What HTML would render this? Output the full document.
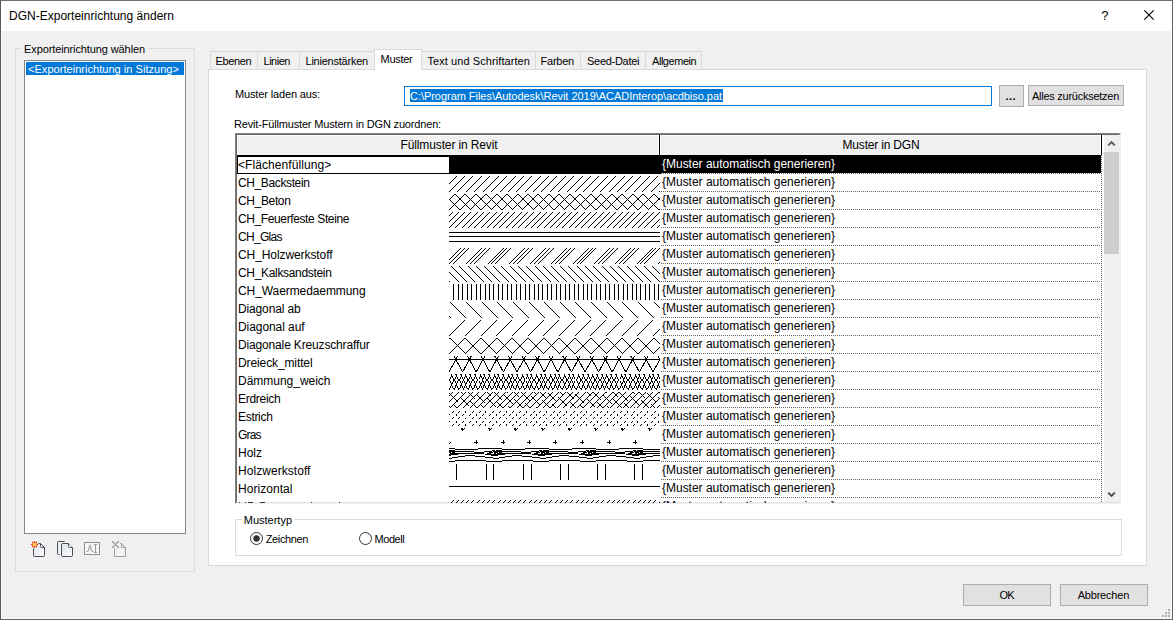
<!DOCTYPE html>
<html lang="de">
<head>
<meta charset="utf-8">
<title>DGN-Exporteinrichtung ändern</title>
<style>
html,body{margin:0;padding:0;}
body{width:1173px;height:620px;overflow:hidden;background:#f0f0f0;font-family:"Liberation Sans",sans-serif;font-size:11px;color:#000;position:relative;}
.a{position:absolute;box-sizing:border-box;}
.t{position:absolute;white-space:pre;line-height:16px;height:16px;}
.grp{border:1px solid #dcdcdc;}
.btn{background:#e1e1e1;border:1px solid #adadad;}
.dot{height:1px;background-image:repeating-linear-gradient(90deg,#666 0 1px,#fff 1px 2px);}
svg{position:absolute;overflow:hidden;}
</style>
</head>
<body>
<div class="a" style="left:0px;top:0px;width:1173px;height:620px;border:1px solid #646464;border-top-color:#6e6e6e;border-left-color:#5a5a5a;"></div>
<div class="a" style="left:1px;top:618px;width:1171px;height:1px;background:#fafafa;"></div>
<div class="a" style="left:1171px;top:31px;width:1px;height:588px;background:#fafafa;"></div>
<div class="a" style="left:1px;top:31px;width:1px;height:588px;background:#fafafa;"></div>
<div class="a" style="left:1px;top:1px;width:1171px;height:30px;background:#fff;"></div>
<svg style="left:1144px;top:10px" width="10" height="10" viewBox="0 0 10 10"><path d="M0.3 0.3 L9.7 9.7 M9.7 0.3 L0.3 9.7" stroke="#000" stroke-width="1.1" fill="none"/></svg>
<div class="a grp" style="left:15px;top:48px;width:180px;height:524px;"></div>
<div class="a" style="left:21px;top:44px;width:127px;height:10px;background:#f0f0f0;"></div>
<div class="a" style="left:24px;top:60px;width:162px;height:474px;background:#fff;border:1px solid #828790;"></div>
<div class="a" style="left:26px;top:62px;width:158px;height:13px;background:#0078d7;"></div>
<div class="a" style="left:208px;top:69px;width:939px;height:497px;background:#fff;border:1px solid #d9d9d9;"></div>
<div class="a" style="left:210px;top:51px;width:492px;height:18px;background:#f0f0f0;border:1px solid #d9d9d9;border-bottom:none;"></div>
<div class="a" style="left:257px;top:52px;width:1px;height:17px;background:#d9d9d9;"></div>
<div class="a" style="left:299px;top:52px;width:1px;height:17px;background:#d9d9d9;"></div>
<div class="a" style="left:535px;top:52px;width:1px;height:17px;background:#d9d9d9;"></div>
<div class="a" style="left:580px;top:52px;width:1px;height:17px;background:#d9d9d9;"></div>
<div class="a" style="left:645px;top:52px;width:1px;height:17px;background:#d9d9d9;"></div>
<div class="a" style="left:374px;top:49px;width:48px;height:21px;background:#fff;border:1px solid #d9d9d9;border-bottom:none;"></div>
<div class="a" style="left:404px;top:86px;width:588px;height:20px;background:#fff;border:1px solid #0078d7;"></div>
<div class="a" style="left:410px;top:89px;width:313px;height:13px;background:#0078d7;"></div>
<div class="a btn" style="left:999px;top:85px;width:25px;height:22px;"></div>
<div class="a btn" style="left:1028px;top:85px;width:96px;height:21px;"></div>
<div class="a" style="left:235px;top:133px;width:886px;height:371px;background:#fff;border:1px solid #828282;border-right-color:#f0f0f0;border-bottom-color:#f0f0f0;"></div>
<div class="a" style="left:236px;top:134px;width:884px;height:369px;border:1px solid #696969;border-right-color:#e3e3e3;border-bottom-color:#e3e3e3;"></div>
<div class="a" style="left:237px;top:135px;width:865px;height:20px;background:#fff;"></div>
<div class="a" style="left:238px;top:136px;width:420px;height:19px;background:#f0f0f0;"></div>
<div class="a" style="left:661px;top:136px;width:439px;height:19px;background:#f0f0f0;"></div>
<div class="a" style="left:659px;top:135px;width:1px;height:20px;background:#000;"></div>
<div class="a" style="left:1101px;top:135px;width:1px;height:20px;background:#000;"></div>
<div class="a" style="left:237px;top:155px;width:864px;height:19px;background:#000;"></div>
<div class="a" style="left:238px;top:157px;width:211px;height:16px;background:#fff;"></div>
<div class="a dot" style="left:661px;top:173px;width:440px;height:1px;"></div>
<div class="a dot" style="left:661px;top:191px;width:440px;height:1px;"></div>
<div class="a dot" style="left:661px;top:209px;width:440px;height:1px;"></div>
<div class="a dot" style="left:661px;top:227px;width:440px;height:1px;"></div>
<div class="a dot" style="left:661px;top:245px;width:440px;height:1px;"></div>
<div class="a dot" style="left:661px;top:263px;width:440px;height:1px;"></div>
<div class="a dot" style="left:661px;top:281px;width:440px;height:1px;"></div>
<div class="a dot" style="left:661px;top:299px;width:440px;height:1px;"></div>
<div class="a dot" style="left:661px;top:317px;width:440px;height:1px;"></div>
<div class="a dot" style="left:661px;top:335px;width:440px;height:1px;"></div>
<div class="a dot" style="left:661px;top:353px;width:440px;height:1px;"></div>
<div class="a dot" style="left:661px;top:371px;width:440px;height:1px;"></div>
<div class="a dot" style="left:661px;top:389px;width:440px;height:1px;"></div>
<div class="a dot" style="left:661px;top:407px;width:440px;height:1px;"></div>
<div class="a dot" style="left:661px;top:425px;width:440px;height:1px;"></div>
<div class="a dot" style="left:661px;top:443px;width:440px;height:1px;"></div>
<div class="a dot" style="left:661px;top:461px;width:440px;height:1px;"></div>
<div class="a dot" style="left:661px;top:479px;width:440px;height:1px;"></div>
<div class="a dot" style="left:661px;top:497px;width:440px;height:1px;"></div>
<div class="a" style="left:1101px;top:155px;width:1px;height:347px;width:1px;background-image:repeating-linear-gradient(180deg,#666 0 1px,#fff 1px 2px);"></div>
<div class="a" style="left:1104px;top:135px;width:17px;height:367px;background:#f0f0f0;"></div>
<div class="a" style="left:1104px;top:152px;width:15px;height:102px;background:#cdcdcd;"></div>
<svg style="left:1107px;top:140px" width="9" height="7" viewBox="0 0 9 7"><path d="M1.2 5.4 L4.5 2.1 L7.8 5.4" stroke="#5c5c5c" stroke-width="2" fill="none"/></svg>
<svg style="left:1107px;top:491px" width="9" height="7" viewBox="0 0 9 7"><path d="M1.2 1.6 L4.5 4.9 L7.8 1.6" stroke="#4a4a4a" stroke-width="2" fill="none"/></svg>
<div class="a grp" style="left:235px;top:519px;width:887px;height:37px;"></div>
<div class="a" style="left:242px;top:513px;width:52px;height:12px;background:#fff;"></div>
<svg style="left:250px;top:532px" width="13" height="13" viewBox="0 0 13 13"><circle cx="6.5" cy="6.5" r="6" fill="#fff" stroke="#333" stroke-width="1"/><circle cx="6.5" cy="6.5" r="3.2" fill="#333"/></svg>
<svg style="left:359px;top:532px" width="13" height="13" viewBox="0 0 13 13"><circle cx="6.5" cy="6.5" r="6" fill="#fff" stroke="#333" stroke-width="1"/></svg>
<div class="a btn" style="left:963px;top:584px;width:88px;height:22px;"></div>
<div class="a btn" style="left:1060px;top:584px;width:88px;height:22px;"></div>
<svg style="left:30px;top:540px" width="17" height="18" viewBox="0 0 17 18"><defs><linearGradient id="g1" x1="0" y1="0" x2="1" y2="1"><stop offset="0" stop-color="#dde1e9"/><stop offset="1" stop-color="#fdfdfe"/></linearGradient></defs><path d="M3.5 7 V15.5 Q3.5 16.5 4.5 16.5 H13.5 Q14.5 16.5 14.5 15.5 V7.5 L10.5 3.5 H7 Z" fill="url(#g1)" stroke="none"/><path d="M3.5 8.5 V15.5 Q3.5 16.5 4.5 16.5 H13.5 Q14.5 16.5 14.5 15.5 V7.5 L10.5 3.5 H8.5 M10.5 3.5 V6.5 Q10.5 7.5 11.5 7.5 H14.5" fill="none" stroke="#474c55" stroke-width="1"/><path d="M4.5 1 V8 M1 4.5 H8 M2 2 L7 7 M7 2 L2 7" stroke="#e62310" stroke-width="1.1" fill="none"/><circle cx="4.5" cy="4.5" r="1.9" fill="#ffb21c"/><circle cx="4.5" cy="4.5" r="1.1" fill="#fff45a"/></svg>
<svg style="left:55px;top:539px" width="19" height="19" viewBox="0 0 19 19"><path d="M9.7 2.5 H3.5 Q2.5 2.5 2.5 3.5 V14.5 Q2.5 15.5 3.5 15.5 H6 V2.5 Z" fill="#eceef3" stroke="none"/><path d="M9.7 2.5 H3.5 Q2.5 2.5 2.5 3.5 V14.5 Q2.5 15.5 3.5 15.5 H4.6" fill="none" stroke="#474c55" stroke-width="1"/><path d="M6.5 5.5 Q6.5 4.5 7.5 4.5 H13.5 L17.5 8.5 V16.5 Q17.5 17.5 16.5 17.5 H7.5 Q6.5 17.5 6.5 16.5 Z" fill="url(#g1)" stroke="#474c55" stroke-width="1"/><path d="M13.5 4.5 V7.5 Q13.5 8.5 14.5 8.5 H17.5" fill="#fff" stroke="#474c55" stroke-width="1"/></svg>
<svg style="left:83px;top:541px" width="18" height="15" viewBox="0 0 18 15"><rect x="1.5" y="1.5" width="15" height="12" fill="#f6f6f6" stroke="#8f8f8f" stroke-width="1"/><path d="M3.5 10.5 h1.5 L7 5 L9 10.5 h1.5 M7 3.5 V5" fill="none" stroke="#9a9a9a" stroke-width="1"/><rect x="6" y="5.5" width="2" height="2" fill="#fff" stroke="#9a9a9a" stroke-width="0.8"/><path d="M12.5 3.5 V11.5 M11 3.5 h3 M11 11.5 h3" fill="none" stroke="#9a9a9a" stroke-width="1"/></svg>
<svg style="left:111px;top:540px" width="17" height="18" viewBox="0 0 17 18"><path d="M3.5 8.5 V16.5 H14.5 V7.5 L10.5 3.5 H9 M10.5 3.5 V7.5 H14.5" fill="#f3f3f3" stroke="#9b9b9b" stroke-width="1"/><path d="M1 2h1v1h-1zM1 6h1v1h-1zM2 1h1v1h-1zM2 3h1v1h-1zM2 5h1v1h-1zM2 7h1v1h-1zM3 2h1v1h-1zM3 4h1v1h-1zM3 6h1v1h-1zM4 3h1v1h-1zM4 5h1v1h-1zM5 2h1v1h-1zM5 4h1v1h-1zM5 6h1v1h-1zM6 1h1v1h-1zM6 3h1v1h-1zM6 5h1v1h-1zM6 7h1v1h-1zM7 2h1v1h-1zM7 6h1v1h-1z" fill="#d2d2d2" stroke="none"/><path d="M1 1h1v1h-1zM1 7h1v1h-1zM2 2h1v1h-1zM2 6h1v1h-1zM3 3h1v1h-1zM3 5h1v1h-1zM4 4h1v1h-1zM5 3h1v1h-1zM5 5h1v1h-1zM6 2h1v1h-1zM6 6h1v1h-1zM7 1h1v1h-1zM7 7h1v1h-1z" fill="#8c8c8c" stroke="none"/></svg>
<div class="a" style="left:1168px;top:609px;width:2px;height:2px;background:#b4b4b4;"></div>
<div class="a" style="left:1165px;top:612px;width:2px;height:2px;background:#b4b4b4;"></div>
<div class="a" style="left:1168px;top:612px;width:2px;height:2px;background:#b4b4b4;"></div>
<div class="a" style="left:1162px;top:615px;width:2px;height:2px;background:#b4b4b4;"></div>
<div class="a" style="left:1165px;top:615px;width:2px;height:2px;background:#b4b4b4;"></div>
<div class="a" style="left:1168px;top:615px;width:2px;height:2px;background:#b4b4b4;"></div>
<svg style="left:449px;top:176px" width="211" height="16" viewBox="0 0 211 16" shape-rendering="crispEdges" fill="none" stroke="#000" stroke-width="1"><path d="M-8 16 L8 0M0 16 L16 0M8 16 L24 0M17 16 L33 0M25 16 L41 0M34 16 L50 0M42 16 L58 0M51 16 L67 0M59 16 L75 0M67 16 L83 0M76 16 L92 0M84 16 L100 0M92 16 L108 0M101 16 L117 0M109 16 L125 0M118 16 L134 0M126 16 L142 0M134 16 L150 0M143 16 L159 0M151 16 L167 0M160 16 L176 0M168 16 L184 0M176 16 L192 0M185 16 L201 0M193 16 L209 0M202 16 L218 0M210 16 L226 0"/></svg>
<svg style="left:449px;top:194px" width="211" height="16" viewBox="0 0 211 16" shape-rendering="crispEdges" fill="none" stroke="#000" stroke-width="1"><path d="M-10 16 L6 0M0 16 L16 0M11 16 L27 0M21 16 L37 0M32 16 L48 0M42 16 L58 0M53 16 L69 0M63 16 L79 0M73 16 L89 0M84 16 L100 0M94 16 L110 0M105 16 L121 0M115 16 L131 0M126 16 L142 0M136 16 L152 0M147 16 L163 0M157 16 L173 0M168 16 L184 0M178 16 L194 0M189 16 L205 0M199 16 L215 0M210 16 L226 0"/><path d="M-15 0 L1 16M-5 0 L11 16M6 0 L22 16M16 0 L32 16M27 0 L43 16M37 0 L53 16M48 0 L64 16M58 0 L74 16M69 0 L85 16M79 0 L95 16M89 0 L105 16M100 0 L116 16M110 0 L126 16M121 0 L137 16M131 0 L147 16M142 0 L158 16M152 0 L168 16M163 0 L179 16M173 0 L189 16M184 0 L200 16M194 0 L210 16M205 0 L221 16"/></svg>
<svg style="left:449px;top:212px" width="211" height="16" viewBox="0 0 211 16" shape-rendering="crispEdges" fill="none" stroke="#000" stroke-width="1"><path d="M-12 16 L4 0M-6 16 L10 0M0 16 L16 0M6 16 L22 0M13 16 L29 0M19 16 L35 0M25 16 L41 0M32 16 L48 0M38 16 L54 0M44 16 L60 0M50 16 L66 0M57 16 L73 0M63 16 L79 0M69 16 L85 0M76 16 L92 0M82 16 L98 0M88 16 L104 0M95 16 L111 0M101 16 L117 0M107 16 L123 0M113 16 L129 0M120 16 L136 0M126 16 L142 0M132 16 L148 0M139 16 L155 0M145 16 L161 0M151 16 L167 0M158 16 L174 0M164 16 L180 0M170 16 L186 0M176 16 L192 0M183 16 L199 0M189 16 L205 0M195 16 L211 0M202 16 L218 0M208 16 L224 0"/></svg>
<svg style="left:449px;top:230px" width="211" height="16" viewBox="0 0 211 16" shape-rendering="crispEdges" fill="none" stroke="#000" stroke-width="1"><path d="M0 2.5 H211"/><path d="M0 6.5 H211"/><path d="M0 11.5 H211"/></svg>
<svg style="left:449px;top:248px" width="211" height="16" viewBox="0 0 211 16" shape-rendering="crispEdges" fill="none" stroke="#000" stroke-width="1"><path d="M-4 16 L12 0M17 16 L33 0M39 16 L55 0M60 16 L76 0M81 16 L97 0M102 16 L118 0M124 16 L140 0M145 16 L161 0M166 16 L182 0M188 16 L204 0M209 16 L225 0"/><path d="M0 16 L16 0M21 16 L37 0M42 16 L58 0M64 16 L80 0M85 16 L101 0M106 16 L122 0M128 16 L144 0M149 16 L165 0M170 16 L186 0M191 16 L207 0"/><path d="M4 16 L20 0M25 16 L41 0M46 16 L62 0M68 16 L84 0M89 16 L105 0M110 16 L126 0M131 16 L147 0M153 16 L169 0M174 16 L190 0M195 16 L211 0"/></svg>
<svg style="left:449px;top:266px" width="211" height="16" viewBox="0 0 211 16" shape-rendering="crispEdges" fill="none" stroke="#000" stroke-width="1"><path d="M-15 0 L1 16M-6 0 L10 16M2 0 L18 16M10 0 L26 16M19 0 L35 16M27 0 L43 16M35 0 L51 16M44 0 L60 16M52 0 L68 16M61 0 L77 16M69 0 L85 16M77 0 L93 16M86 0 L102 16M94 0 L110 16M102 0 L118 16M111 0 L127 16M119 0 L135 16M128 0 L144 16M136 0 L152 16M144 0 L160 16M153 0 L169 16M161 0 L177 16M169 0 L185 16M178 0 L194 16M186 0 L202 16M195 0 L211 16M203 0 L219 16M211 0 L227 16"/></svg>
<svg style="left:449px;top:284px" width="211" height="16" viewBox="0 0 211 16" shape-rendering="crispEdges" fill="none" stroke="#000" stroke-width="1"><path d="M4.5 0 V16M9.5 0 V16M13.5 0 V16M18.5 0 V16M22.5 0 V16M27.5 0 V16M31.5 0 V16M36.5 0 V16M40.5 0 V16M44.5 0 V16M49.5 0 V16M53.5 0 V16M58.5 0 V16M62.5 0 V16M67.5 0 V16M71.5 0 V16M76.5 0 V16M80.5 0 V16M85.5 0 V16M89.5 0 V16M93.5 0 V16M98.5 0 V16M102.5 0 V16M107.5 0 V16M111.5 0 V16M116.5 0 V16M120.5 0 V16M125.5 0 V16M129.5 0 V16M134.5 0 V16M138.5 0 V16M142.5 0 V16M147.5 0 V16M151.5 0 V16M156.5 0 V16M160.5 0 V16M165.5 0 V16M169.5 0 V16M174.5 0 V16M178.5 0 V16M183.5 0 V16M187.5 0 V16M191.5 0 V16M196.5 0 V16M200.5 0 V16M205.5 0 V16M209.5 0 V16"/></svg>
<svg style="left:449px;top:302px" width="211" height="16" viewBox="0 0 211 16" shape-rendering="crispEdges" fill="none" stroke="#000" stroke-width="1"><path d="M-14 0 L2 16M1 0 L17 16M17 0 L33 16M33 0 L49 16M48 0 L64 16M64 0 L80 16M80 0 L96 16M95 0 L111 16M111 0 L127 16M126 0 L142 16M142 0 L158 16M158 0 L174 16M173 0 L189 16M189 0 L205 16M205 0 L221 16"/></svg>
<svg style="left:449px;top:320px" width="211" height="16" viewBox="0 0 211 16" shape-rendering="crispEdges" fill="none" stroke="#000" stroke-width="1"><path d="M-16 16 L0 0M0 16 L16 0M16 16 L32 0M32 16 L48 0M47 16 L63 0M63 16 L79 0M79 16 L95 0M94 16 L110 0M110 16 L126 0M126 16 L142 0M141 16 L157 0M157 16 L173 0M173 16 L189 0M188 16 L204 0M204 16 L220 0"/></svg>
<svg style="left:449px;top:338px" width="211" height="16" viewBox="0 0 211 16" shape-rendering="crispEdges" fill="none" stroke="#000" stroke-width="1"><path d="M-15 16 L1 0M0 16 L16 0M16 16 L32 0M32 16 L48 0M47 16 L63 0M63 16 L79 0M79 16 L95 0M94 16 L110 0M110 16 L126 0M126 16 L142 0M142 16 L158 0M157 16 L173 0M173 16 L189 0M189 16 L205 0M204 16 L220 0"/><path d="M-15 0 L1 16M1 0 L17 16M16 0 L32 16M32 0 L48 16M48 0 L64 16M63 0 L79 16M79 0 L95 16M95 0 L111 16M110 0 L126 16M126 0 L142 16M142 0 L158 16M158 0 L174 16M173 0 L189 16M189 0 L205 16M205 0 L221 16"/></svg>
<svg style="left:449px;top:356px" width="211" height="16" viewBox="0 0 211 16" shape-rendering="crispEdges" fill="none" stroke="#000" stroke-width="1"><path d="M0 3.5 H211"/><path d="M-22.27 0 L-13.57 16 L-4.87 0M-8.67 0 L0.03 16 L8.73 0M4.93 0 L13.63 16 L22.33 0M18.53 0 L27.23 16 L35.93 0M32.13 0 L40.83 16 L49.53 0M45.73 0 L54.43 16 L63.13 0M59.33 0 L68.03 16 L76.73 0M72.93 0 L81.63 16 L90.33 0M86.53 0 L95.23 16 L103.93 0M100.13 0 L108.83 16 L117.53 0M113.73 0 L122.43 16 L131.13 0M127.33 0 L136.03 16 L144.73 0M140.93 0 L149.63 16 L158.33 0M154.53 0 L163.23 16 L171.93 0M168.13 0 L176.83 16 L185.53 0M181.73 0 L190.43 16 L199.13 0M195.33 0 L204.03 16 L212.73 0M208.93 0 L217.63 16 L226.33 0M222.53 0 L231.23 16 L239.93 0"/></svg>
<svg style="left:449px;top:374px" width="211" height="16" viewBox="0 0 211 16" shape-rendering="crispEdges" fill="none" stroke="#000" stroke-width="1"><path fill="#000" stroke="none" d="M0 14h1v1h-1zM0 5h1v1h-1zM0 6h1v1h-1zM0 15h1v1h-1zM2 0h1v1h-1zM2 1h1v1h-1zM2 2h1v1h-1zM3 2h1v1h-1zM1 3h1v1h-1zM3 3h1v1h-1zM1 4h1v1h-1zM4 4h1v1h-1zM1 7h1v1h-1zM4 7h1v1h-1zM1 8h1v1h-1zM3 8h1v1h-1zM2 9h1v1h-1zM3 9h1v1h-1zM2 10h1v1h-1zM2 11h1v1h-1zM1 12h1v1h-1zM3 12h1v1h-1zM1 13h1v1h-1zM3 13h1v1h-1zM4 14h1v1h-1zM4 5h1v1h-1zM5 5h1v1h-1zM4 6h1v1h-1zM5 6h1v1h-1zM5 15h1v1h-1zM7 0h1v1h-1zM6 0h1v1h-1zM7 1h1v1h-1zM7 2h1v1h-1zM6 3h1v1h-1zM8 3h1v1h-1zM6 4h1v1h-1zM8 4h1v1h-1zM6 7h1v1h-1zM8 7h1v1h-1zM6 8h1v1h-1zM8 8h1v1h-1zM7 9h1v1h-1zM7 10h1v1h-1zM7 11h1v1h-1zM6 11h1v1h-1zM6 12h1v1h-1zM8 12h1v1h-1zM6 13h1v1h-1zM8 13h1v1h-1zM5 14h1v1h-1zM9 14h1v1h-1zM9 5h1v1h-1zM10 5h1v1h-1zM9 6h1v1h-1zM10 6h1v1h-1zM9 15h1v1h-1zM12 0h1v1h-1zM11 0h1v1h-1zM12 1h1v1h-1zM12 2h1v1h-1zM11 3h1v1h-1zM13 3h1v1h-1zM11 4h1v1h-1zM13 4h1v1h-1zM11 7h1v1h-1zM13 7h1v1h-1zM11 8h1v1h-1zM13 8h1v1h-1zM12 9h1v1h-1zM12 10h1v1h-1zM12 11h1v1h-1zM11 11h1v1h-1zM11 12h1v1h-1zM13 12h1v1h-1zM11 13h1v1h-1zM13 13h1v1h-1zM10 14h1v1h-1zM14 14h1v1h-1zM14 5h1v1h-1zM14 6h1v1h-1zM14 15h1v1h-1zM16 0h1v1h-1zM16 1h1v1h-1zM16 2h1v1h-1zM17 2h1v1h-1zM15 3h1v1h-1zM17 3h1v1h-1zM15 4h1v1h-1zM18 4h1v1h-1zM15 7h1v1h-1zM18 7h1v1h-1zM15 8h1v1h-1zM17 8h1v1h-1zM16 9h1v1h-1zM17 9h1v1h-1zM16 10h1v1h-1zM16 11h1v1h-1zM15 12h1v1h-1zM17 12h1v1h-1zM15 13h1v1h-1zM17 13h1v1h-1zM18 14h1v1h-1zM18 5h1v1h-1zM19 5h1v1h-1zM18 6h1v1h-1zM19 6h1v1h-1zM19 15h1v1h-1zM21 0h1v1h-1zM20 0h1v1h-1zM21 1h1v1h-1zM21 2h1v1h-1zM20 3h1v1h-1zM22 3h1v1h-1zM20 4h1v1h-1zM22 4h1v1h-1zM20 7h1v1h-1zM22 7h1v1h-1zM20 8h1v1h-1zM22 8h1v1h-1zM21 9h1v1h-1zM21 10h1v1h-1zM21 11h1v1h-1zM20 11h1v1h-1zM20 12h1v1h-1zM22 12h1v1h-1zM20 13h1v1h-1zM22 13h1v1h-1zM19 14h1v1h-1zM23 14h1v1h-1zM23 5h1v1h-1zM24 5h1v1h-1zM23 6h1v1h-1zM24 6h1v1h-1zM23 15h1v1h-1zM26 0h1v1h-1zM25 0h1v1h-1zM26 1h1v1h-1zM26 2h1v1h-1zM25 3h1v1h-1zM27 3h1v1h-1zM25 4h1v1h-1zM27 4h1v1h-1zM25 7h1v1h-1zM27 7h1v1h-1zM25 8h1v1h-1zM27 8h1v1h-1zM26 9h1v1h-1zM26 10h1v1h-1zM26 11h1v1h-1zM25 11h1v1h-1zM25 12h1v1h-1zM27 12h1v1h-1zM25 13h1v1h-1zM27 13h1v1h-1zM24 14h1v1h-1zM28 14h1v1h-1zM28 5h1v1h-1zM28 6h1v1h-1zM28 15h1v1h-1zM31 0h1v1h-1zM31 1h1v1h-1zM31 2h1v1h-1zM32 2h1v1h-1zM30 3h1v1h-1zM32 3h1v1h-1zM30 4h1v1h-1zM33 4h1v1h-1zM30 7h1v1h-1zM33 7h1v1h-1zM30 8h1v1h-1zM32 8h1v1h-1zM31 9h1v1h-1zM32 9h1v1h-1zM31 10h1v1h-1zM31 11h1v1h-1zM30 12h1v1h-1zM32 12h1v1h-1zM30 13h1v1h-1zM32 13h1v1h-1zM29 14h1v1h-1zM33 14h1v1h-1zM33 5h1v1h-1zM33 6h1v1h-1zM33 15h1v1h-1zM35 0h1v1h-1zM34 0h1v1h-1zM35 1h1v1h-1zM35 2h1v1h-1zM34 3h1v1h-1zM36 3h1v1h-1zM34 4h1v1h-1zM36 4h1v1h-1zM34 7h1v1h-1zM36 7h1v1h-1zM34 8h1v1h-1zM36 8h1v1h-1zM35 9h1v1h-1zM35 10h1v1h-1zM35 11h1v1h-1zM34 11h1v1h-1zM34 12h1v1h-1zM36 12h1v1h-1zM34 13h1v1h-1zM36 13h1v1h-1zM37 14h1v1h-1zM37 5h1v1h-1zM38 5h1v1h-1zM37 6h1v1h-1zM38 6h1v1h-1zM38 15h1v1h-1zM40 0h1v1h-1zM39 0h1v1h-1zM40 1h1v1h-1zM40 2h1v1h-1zM39 3h1v1h-1zM41 3h1v1h-1zM39 4h1v1h-1zM41 4h1v1h-1zM39 7h1v1h-1zM41 7h1v1h-1zM39 8h1v1h-1zM41 8h1v1h-1zM40 9h1v1h-1zM40 10h1v1h-1zM40 11h1v1h-1zM39 11h1v1h-1zM39 12h1v1h-1zM41 12h1v1h-1zM39 13h1v1h-1zM41 13h1v1h-1zM38 14h1v1h-1zM42 14h1v1h-1zM42 5h1v1h-1zM43 5h1v1h-1zM42 6h1v1h-1zM43 6h1v1h-1zM42 15h1v1h-1zM45 0h1v1h-1zM45 1h1v1h-1zM45 2h1v1h-1zM46 2h1v1h-1zM44 3h1v1h-1zM46 3h1v1h-1zM44 4h1v1h-1zM47 4h1v1h-1zM44 7h1v1h-1zM47 7h1v1h-1zM44 8h1v1h-1zM46 8h1v1h-1zM45 9h1v1h-1zM46 9h1v1h-1zM45 10h1v1h-1zM45 11h1v1h-1zM44 12h1v1h-1zM46 12h1v1h-1zM44 13h1v1h-1zM46 13h1v1h-1zM43 14h1v1h-1zM47 14h1v1h-1zM47 5h1v1h-1zM47 6h1v1h-1zM47 15h1v1h-1zM49 0h1v1h-1zM48 0h1v1h-1zM49 1h1v1h-1zM49 2h1v1h-1zM48 3h1v1h-1zM50 3h1v1h-1zM48 4h1v1h-1zM50 4h1v1h-1zM48 7h1v1h-1zM50 7h1v1h-1zM48 8h1v1h-1zM50 8h1v1h-1zM49 9h1v1h-1zM49 10h1v1h-1zM49 11h1v1h-1zM48 11h1v1h-1zM48 12h1v1h-1zM50 12h1v1h-1zM48 13h1v1h-1zM50 13h1v1h-1zM51 14h1v1h-1zM51 5h1v1h-1zM52 5h1v1h-1zM51 6h1v1h-1zM52 6h1v1h-1zM52 15h1v1h-1zM54 0h1v1h-1zM53 0h1v1h-1zM54 1h1v1h-1zM54 2h1v1h-1zM53 3h1v1h-1zM55 3h1v1h-1zM53 4h1v1h-1zM55 4h1v1h-1zM53 7h1v1h-1zM55 7h1v1h-1zM53 8h1v1h-1zM55 8h1v1h-1zM54 9h1v1h-1zM54 10h1v1h-1zM54 11h1v1h-1zM53 11h1v1h-1zM53 12h1v1h-1zM55 12h1v1h-1zM53 13h1v1h-1zM55 13h1v1h-1zM52 14h1v1h-1zM56 14h1v1h-1zM56 5h1v1h-1zM57 5h1v1h-1zM56 6h1v1h-1zM57 6h1v1h-1zM56 15h1v1h-1zM59 0h1v1h-1zM59 1h1v1h-1zM59 2h1v1h-1zM60 2h1v1h-1zM58 3h1v1h-1zM60 3h1v1h-1zM58 4h1v1h-1zM61 4h1v1h-1zM58 7h1v1h-1zM61 7h1v1h-1zM58 8h1v1h-1zM60 8h1v1h-1zM59 9h1v1h-1zM60 9h1v1h-1zM59 10h1v1h-1zM59 11h1v1h-1zM58 12h1v1h-1zM60 12h1v1h-1zM58 13h1v1h-1zM60 13h1v1h-1zM57 14h1v1h-1zM61 14h1v1h-1zM61 5h1v1h-1zM61 6h1v1h-1zM61 15h1v1h-1zM63 0h1v1h-1zM62 0h1v1h-1zM63 1h1v1h-1zM63 2h1v1h-1zM62 3h1v1h-1zM64 3h1v1h-1zM62 4h1v1h-1zM64 4h1v1h-1zM62 7h1v1h-1zM64 7h1v1h-1zM62 8h1v1h-1zM64 8h1v1h-1zM63 9h1v1h-1zM63 10h1v1h-1zM63 11h1v1h-1zM62 11h1v1h-1zM62 12h1v1h-1zM64 12h1v1h-1zM62 13h1v1h-1zM64 13h1v1h-1zM65 14h1v1h-1zM65 5h1v1h-1zM66 5h1v1h-1zM65 6h1v1h-1zM66 6h1v1h-1zM66 15h1v1h-1zM68 0h1v1h-1zM67 0h1v1h-1zM68 1h1v1h-1zM68 2h1v1h-1zM67 3h1v1h-1zM69 3h1v1h-1zM67 4h1v1h-1zM69 4h1v1h-1zM67 7h1v1h-1zM69 7h1v1h-1zM67 8h1v1h-1zM69 8h1v1h-1zM68 9h1v1h-1zM68 10h1v1h-1zM68 11h1v1h-1zM67 11h1v1h-1zM67 12h1v1h-1zM69 12h1v1h-1zM67 13h1v1h-1zM69 13h1v1h-1zM66 14h1v1h-1zM70 14h1v1h-1zM70 5h1v1h-1zM71 5h1v1h-1zM70 6h1v1h-1zM71 6h1v1h-1zM70 15h1v1h-1zM73 0h1v1h-1zM73 1h1v1h-1zM73 2h1v1h-1zM74 2h1v1h-1zM72 3h1v1h-1zM74 3h1v1h-1zM72 4h1v1h-1zM75 4h1v1h-1zM72 7h1v1h-1zM75 7h1v1h-1zM72 8h1v1h-1zM74 8h1v1h-1zM73 9h1v1h-1zM74 9h1v1h-1zM73 10h1v1h-1zM73 11h1v1h-1zM72 12h1v1h-1zM74 12h1v1h-1zM72 13h1v1h-1zM74 13h1v1h-1zM71 14h1v1h-1zM75 14h1v1h-1zM75 5h1v1h-1zM75 6h1v1h-1zM75 15h1v1h-1zM78 0h1v1h-1zM77 0h1v1h-1zM78 1h1v1h-1zM78 2h1v1h-1zM77 3h1v1h-1zM79 3h1v1h-1zM77 4h1v1h-1zM79 4h1v1h-1zM77 7h1v1h-1zM79 7h1v1h-1zM77 8h1v1h-1zM79 8h1v1h-1zM78 9h1v1h-1zM78 10h1v1h-1zM78 11h1v1h-1zM77 11h1v1h-1zM77 12h1v1h-1zM79 12h1v1h-1zM77 13h1v1h-1zM79 13h1v1h-1zM76 14h1v1h-1zM80 14h1v1h-1zM80 5h1v1h-1zM80 6h1v1h-1zM80 15h1v1h-1zM82 0h1v1h-1zM81 0h1v1h-1zM82 1h1v1h-1zM82 2h1v1h-1zM81 3h1v1h-1zM83 3h1v1h-1zM81 4h1v1h-1zM83 4h1v1h-1zM81 7h1v1h-1zM83 7h1v1h-1zM81 8h1v1h-1zM83 8h1v1h-1zM82 9h1v1h-1zM82 10h1v1h-1zM82 11h1v1h-1zM81 11h1v1h-1zM81 12h1v1h-1zM83 12h1v1h-1zM81 13h1v1h-1zM83 13h1v1h-1zM84 14h1v1h-1zM84 5h1v1h-1zM85 5h1v1h-1zM84 6h1v1h-1zM85 6h1v1h-1zM85 15h1v1h-1zM87 0h1v1h-1zM87 1h1v1h-1zM87 2h1v1h-1zM88 2h1v1h-1zM86 3h1v1h-1zM88 3h1v1h-1zM86 4h1v1h-1zM89 4h1v1h-1zM86 7h1v1h-1zM89 7h1v1h-1zM86 8h1v1h-1zM88 8h1v1h-1zM87 9h1v1h-1zM88 9h1v1h-1zM87 10h1v1h-1zM87 11h1v1h-1zM86 12h1v1h-1zM88 12h1v1h-1zM86 13h1v1h-1zM88 13h1v1h-1zM85 14h1v1h-1zM89 14h1v1h-1zM89 5h1v1h-1zM90 5h1v1h-1zM89 6h1v1h-1zM90 6h1v1h-1zM89 15h1v1h-1zM92 0h1v1h-1zM91 0h1v1h-1zM92 1h1v1h-1zM92 2h1v1h-1zM91 3h1v1h-1zM93 3h1v1h-1zM91 4h1v1h-1zM93 4h1v1h-1zM91 7h1v1h-1zM93 7h1v1h-1zM91 8h1v1h-1zM93 8h1v1h-1zM92 9h1v1h-1zM92 10h1v1h-1zM92 11h1v1h-1zM91 11h1v1h-1zM91 12h1v1h-1zM93 12h1v1h-1zM91 13h1v1h-1zM93 13h1v1h-1zM90 14h1v1h-1zM94 14h1v1h-1zM94 5h1v1h-1zM94 6h1v1h-1zM94 15h1v1h-1zM96 0h1v1h-1zM95 0h1v1h-1zM96 1h1v1h-1zM96 2h1v1h-1zM95 3h1v1h-1zM97 3h1v1h-1zM95 4h1v1h-1zM97 4h1v1h-1zM95 7h1v1h-1zM97 7h1v1h-1zM95 8h1v1h-1zM97 8h1v1h-1zM96 9h1v1h-1zM96 10h1v1h-1zM96 11h1v1h-1zM95 11h1v1h-1zM95 12h1v1h-1zM97 12h1v1h-1zM95 13h1v1h-1zM97 13h1v1h-1zM98 14h1v1h-1zM98 5h1v1h-1zM99 5h1v1h-1zM98 6h1v1h-1zM99 6h1v1h-1zM99 15h1v1h-1zM101 0h1v1h-1zM101 1h1v1h-1zM101 2h1v1h-1zM102 2h1v1h-1zM100 3h1v1h-1zM102 3h1v1h-1zM100 4h1v1h-1zM103 4h1v1h-1zM100 7h1v1h-1zM103 7h1v1h-1zM100 8h1v1h-1zM102 8h1v1h-1zM101 9h1v1h-1zM102 9h1v1h-1zM101 10h1v1h-1zM101 11h1v1h-1zM100 12h1v1h-1zM102 12h1v1h-1zM100 13h1v1h-1zM102 13h1v1h-1zM99 14h1v1h-1zM103 14h1v1h-1zM103 5h1v1h-1zM104 5h1v1h-1zM103 6h1v1h-1zM104 6h1v1h-1zM103 15h1v1h-1zM106 0h1v1h-1zM105 0h1v1h-1zM106 1h1v1h-1zM106 2h1v1h-1zM105 3h1v1h-1zM107 3h1v1h-1zM105 4h1v1h-1zM107 4h1v1h-1zM105 7h1v1h-1zM107 7h1v1h-1zM105 8h1v1h-1zM107 8h1v1h-1zM106 9h1v1h-1zM106 10h1v1h-1zM106 11h1v1h-1zM105 11h1v1h-1zM105 12h1v1h-1zM107 12h1v1h-1zM105 13h1v1h-1zM107 13h1v1h-1zM104 14h1v1h-1zM108 14h1v1h-1zM108 5h1v1h-1zM108 6h1v1h-1zM108 15h1v1h-1zM110 0h1v1h-1zM109 0h1v1h-1zM110 1h1v1h-1zM110 2h1v1h-1zM109 3h1v1h-1zM111 3h1v1h-1zM109 4h1v1h-1zM111 4h1v1h-1zM109 7h1v1h-1zM111 7h1v1h-1zM109 8h1v1h-1zM111 8h1v1h-1zM110 9h1v1h-1zM110 10h1v1h-1zM110 11h1v1h-1zM109 11h1v1h-1zM109 12h1v1h-1zM111 12h1v1h-1zM109 13h1v1h-1zM111 13h1v1h-1zM112 14h1v1h-1zM112 5h1v1h-1zM113 5h1v1h-1zM112 6h1v1h-1zM113 6h1v1h-1zM113 15h1v1h-1zM115 0h1v1h-1zM115 1h1v1h-1zM115 2h1v1h-1zM116 2h1v1h-1zM114 3h1v1h-1zM116 3h1v1h-1zM114 4h1v1h-1zM117 4h1v1h-1zM114 7h1v1h-1zM117 7h1v1h-1zM114 8h1v1h-1zM116 8h1v1h-1zM115 9h1v1h-1zM116 9h1v1h-1zM115 10h1v1h-1zM115 11h1v1h-1zM114 12h1v1h-1zM116 12h1v1h-1zM114 13h1v1h-1zM116 13h1v1h-1zM113 14h1v1h-1zM117 14h1v1h-1zM117 5h1v1h-1zM118 5h1v1h-1zM117 6h1v1h-1zM118 6h1v1h-1zM117 15h1v1h-1zM120 0h1v1h-1zM119 0h1v1h-1zM120 1h1v1h-1zM120 2h1v1h-1zM119 3h1v1h-1zM121 3h1v1h-1zM119 4h1v1h-1zM121 4h1v1h-1zM119 7h1v1h-1zM121 7h1v1h-1zM119 8h1v1h-1zM121 8h1v1h-1zM120 9h1v1h-1zM120 10h1v1h-1zM120 11h1v1h-1zM119 11h1v1h-1zM119 12h1v1h-1zM121 12h1v1h-1zM119 13h1v1h-1zM121 13h1v1h-1zM118 14h1v1h-1zM122 14h1v1h-1zM122 5h1v1h-1zM122 6h1v1h-1zM122 15h1v1h-1zM124 0h1v1h-1zM123 0h1v1h-1zM124 1h1v1h-1zM124 2h1v1h-1zM123 3h1v1h-1zM125 3h1v1h-1zM123 4h1v1h-1zM125 4h1v1h-1zM123 7h1v1h-1zM125 7h1v1h-1zM123 8h1v1h-1zM125 8h1v1h-1zM124 9h1v1h-1zM124 10h1v1h-1zM124 11h1v1h-1zM123 11h1v1h-1zM123 12h1v1h-1zM125 12h1v1h-1zM123 13h1v1h-1zM125 13h1v1h-1zM126 14h1v1h-1zM127 5h1v1h-1zM127 6h1v1h-1zM127 15h1v1h-1zM129 0h1v1h-1zM129 1h1v1h-1zM129 2h1v1h-1zM130 2h1v1h-1zM128 3h1v1h-1zM130 3h1v1h-1zM128 4h1v1h-1zM131 4h1v1h-1zM128 7h1v1h-1zM131 7h1v1h-1zM128 8h1v1h-1zM130 8h1v1h-1zM129 9h1v1h-1zM130 9h1v1h-1zM129 10h1v1h-1zM129 11h1v1h-1zM128 12h1v1h-1zM130 12h1v1h-1zM128 13h1v1h-1zM130 13h1v1h-1zM127 14h1v1h-1zM131 14h1v1h-1zM131 5h1v1h-1zM132 5h1v1h-1zM131 6h1v1h-1zM132 6h1v1h-1zM132 15h1v1h-1zM134 0h1v1h-1zM133 0h1v1h-1zM134 1h1v1h-1zM134 2h1v1h-1zM133 3h1v1h-1zM135 3h1v1h-1zM133 4h1v1h-1zM135 4h1v1h-1zM133 7h1v1h-1zM135 7h1v1h-1zM133 8h1v1h-1zM135 8h1v1h-1zM134 9h1v1h-1zM134 10h1v1h-1zM134 11h1v1h-1zM133 11h1v1h-1zM133 12h1v1h-1zM135 12h1v1h-1zM133 13h1v1h-1zM135 13h1v1h-1zM132 14h1v1h-1zM136 14h1v1h-1zM136 5h1v1h-1zM137 5h1v1h-1zM136 6h1v1h-1zM137 6h1v1h-1zM136 15h1v1h-1zM139 0h1v1h-1zM138 0h1v1h-1zM139 1h1v1h-1zM139 2h1v1h-1zM138 3h1v1h-1zM140 3h1v1h-1zM138 4h1v1h-1zM140 4h1v1h-1zM138 7h1v1h-1zM140 7h1v1h-1zM138 8h1v1h-1zM140 8h1v1h-1zM139 9h1v1h-1zM139 10h1v1h-1zM139 11h1v1h-1zM138 11h1v1h-1zM138 12h1v1h-1zM140 12h1v1h-1zM138 13h1v1h-1zM140 13h1v1h-1zM137 14h1v1h-1zM141 14h1v1h-1zM141 5h1v1h-1zM141 6h1v1h-1zM141 15h1v1h-1zM143 0h1v1h-1zM143 1h1v1h-1zM143 2h1v1h-1zM144 2h1v1h-1zM142 3h1v1h-1zM144 3h1v1h-1zM142 4h1v1h-1zM145 4h1v1h-1zM142 7h1v1h-1zM145 7h1v1h-1zM142 8h1v1h-1zM144 8h1v1h-1zM143 9h1v1h-1zM144 9h1v1h-1zM143 10h1v1h-1zM143 11h1v1h-1zM142 12h1v1h-1zM144 12h1v1h-1zM142 13h1v1h-1zM144 13h1v1h-1zM145 14h1v1h-1zM145 5h1v1h-1zM146 5h1v1h-1zM145 6h1v1h-1zM146 6h1v1h-1zM146 15h1v1h-1zM148 0h1v1h-1zM147 0h1v1h-1zM148 1h1v1h-1zM148 2h1v1h-1zM147 3h1v1h-1zM149 3h1v1h-1zM147 4h1v1h-1zM149 4h1v1h-1zM147 7h1v1h-1zM149 7h1v1h-1zM147 8h1v1h-1zM149 8h1v1h-1zM148 9h1v1h-1zM148 10h1v1h-1zM148 11h1v1h-1zM147 11h1v1h-1zM147 12h1v1h-1zM149 12h1v1h-1zM147 13h1v1h-1zM149 13h1v1h-1zM146 14h1v1h-1zM150 14h1v1h-1zM150 5h1v1h-1zM151 5h1v1h-1zM150 6h1v1h-1zM151 6h1v1h-1zM150 15h1v1h-1zM153 0h1v1h-1zM152 0h1v1h-1zM153 1h1v1h-1zM153 2h1v1h-1zM152 3h1v1h-1zM154 3h1v1h-1zM152 4h1v1h-1zM154 4h1v1h-1zM152 7h1v1h-1zM154 7h1v1h-1zM152 8h1v1h-1zM154 8h1v1h-1zM153 9h1v1h-1zM153 10h1v1h-1zM153 11h1v1h-1zM152 11h1v1h-1zM152 12h1v1h-1zM154 12h1v1h-1zM152 13h1v1h-1zM154 13h1v1h-1zM151 14h1v1h-1zM155 14h1v1h-1zM155 5h1v1h-1zM155 6h1v1h-1zM155 15h1v1h-1zM157 0h1v1h-1zM157 1h1v1h-1zM157 2h1v1h-1zM158 2h1v1h-1zM156 3h1v1h-1zM158 3h1v1h-1zM156 4h1v1h-1zM159 4h1v1h-1zM156 7h1v1h-1zM159 7h1v1h-1zM156 8h1v1h-1zM158 8h1v1h-1zM157 9h1v1h-1zM158 9h1v1h-1zM157 10h1v1h-1zM157 11h1v1h-1zM156 12h1v1h-1zM158 12h1v1h-1zM156 13h1v1h-1zM158 13h1v1h-1zM159 14h1v1h-1zM159 5h1v1h-1zM160 5h1v1h-1zM159 6h1v1h-1zM160 6h1v1h-1zM160 15h1v1h-1zM162 0h1v1h-1zM161 0h1v1h-1zM162 1h1v1h-1zM162 2h1v1h-1zM161 3h1v1h-1zM163 3h1v1h-1zM161 4h1v1h-1zM163 4h1v1h-1zM161 7h1v1h-1zM163 7h1v1h-1zM161 8h1v1h-1zM163 8h1v1h-1zM162 9h1v1h-1zM162 10h1v1h-1zM162 11h1v1h-1zM161 11h1v1h-1zM161 12h1v1h-1zM163 12h1v1h-1zM161 13h1v1h-1zM163 13h1v1h-1zM160 14h1v1h-1zM164 14h1v1h-1zM164 5h1v1h-1zM165 5h1v1h-1zM164 6h1v1h-1zM165 6h1v1h-1zM164 15h1v1h-1zM167 0h1v1h-1zM166 0h1v1h-1zM167 1h1v1h-1zM167 2h1v1h-1zM166 3h1v1h-1zM168 3h1v1h-1zM166 4h1v1h-1zM168 4h1v1h-1zM166 7h1v1h-1zM168 7h1v1h-1zM166 8h1v1h-1zM168 8h1v1h-1zM167 9h1v1h-1zM167 10h1v1h-1zM167 11h1v1h-1zM166 11h1v1h-1zM166 12h1v1h-1zM168 12h1v1h-1zM166 13h1v1h-1zM168 13h1v1h-1zM165 14h1v1h-1zM169 14h1v1h-1zM169 5h1v1h-1zM169 6h1v1h-1zM169 15h1v1h-1zM172 0h1v1h-1zM172 1h1v1h-1zM172 2h1v1h-1zM173 2h1v1h-1zM171 3h1v1h-1zM173 3h1v1h-1zM171 4h1v1h-1zM174 4h1v1h-1zM171 7h1v1h-1zM174 7h1v1h-1zM171 8h1v1h-1zM173 8h1v1h-1zM172 9h1v1h-1zM173 9h1v1h-1zM172 10h1v1h-1zM172 11h1v1h-1zM171 12h1v1h-1zM173 12h1v1h-1zM171 13h1v1h-1zM173 13h1v1h-1zM170 14h1v1h-1zM174 14h1v1h-1zM174 5h1v1h-1zM174 6h1v1h-1zM174 15h1v1h-1zM176 0h1v1h-1zM175 0h1v1h-1zM176 1h1v1h-1zM176 2h1v1h-1zM175 3h1v1h-1zM177 3h1v1h-1zM175 4h1v1h-1zM177 4h1v1h-1zM175 7h1v1h-1zM177 7h1v1h-1zM175 8h1v1h-1zM177 8h1v1h-1zM176 9h1v1h-1zM176 10h1v1h-1zM176 11h1v1h-1zM175 11h1v1h-1zM175 12h1v1h-1zM177 12h1v1h-1zM175 13h1v1h-1zM177 13h1v1h-1zM178 14h1v1h-1zM178 5h1v1h-1zM179 5h1v1h-1zM178 6h1v1h-1zM179 6h1v1h-1zM179 15h1v1h-1zM181 0h1v1h-1zM180 0h1v1h-1zM181 1h1v1h-1zM181 2h1v1h-1zM180 3h1v1h-1zM182 3h1v1h-1zM180 4h1v1h-1zM182 4h1v1h-1zM180 7h1v1h-1zM182 7h1v1h-1zM180 8h1v1h-1zM182 8h1v1h-1zM181 9h1v1h-1zM181 10h1v1h-1zM181 11h1v1h-1zM180 11h1v1h-1zM180 12h1v1h-1zM182 12h1v1h-1zM180 13h1v1h-1zM182 13h1v1h-1zM179 14h1v1h-1zM183 14h1v1h-1zM183 5h1v1h-1zM184 5h1v1h-1zM183 6h1v1h-1zM184 6h1v1h-1zM183 15h1v1h-1zM186 0h1v1h-1zM186 1h1v1h-1zM186 2h1v1h-1zM187 2h1v1h-1zM185 3h1v1h-1zM187 3h1v1h-1zM185 4h1v1h-1zM188 4h1v1h-1zM185 7h1v1h-1zM188 7h1v1h-1zM185 8h1v1h-1zM187 8h1v1h-1zM186 9h1v1h-1zM187 9h1v1h-1zM186 10h1v1h-1zM186 11h1v1h-1zM185 12h1v1h-1zM187 12h1v1h-1zM185 13h1v1h-1zM187 13h1v1h-1zM184 14h1v1h-1zM188 14h1v1h-1zM188 5h1v1h-1zM188 6h1v1h-1zM188 15h1v1h-1zM190 0h1v1h-1zM189 0h1v1h-1zM190 1h1v1h-1zM190 2h1v1h-1zM189 3h1v1h-1zM191 3h1v1h-1zM189 4h1v1h-1zM191 4h1v1h-1zM189 7h1v1h-1zM191 7h1v1h-1zM189 8h1v1h-1zM191 8h1v1h-1zM190 9h1v1h-1zM190 10h1v1h-1zM190 11h1v1h-1zM189 11h1v1h-1zM189 12h1v1h-1zM191 12h1v1h-1zM189 13h1v1h-1zM191 13h1v1h-1zM192 14h1v1h-1zM192 5h1v1h-1zM193 5h1v1h-1zM192 6h1v1h-1zM193 6h1v1h-1zM193 15h1v1h-1zM195 0h1v1h-1zM194 0h1v1h-1zM195 1h1v1h-1zM195 2h1v1h-1zM194 3h1v1h-1zM196 3h1v1h-1zM194 4h1v1h-1zM196 4h1v1h-1zM194 7h1v1h-1zM196 7h1v1h-1zM194 8h1v1h-1zM196 8h1v1h-1zM195 9h1v1h-1zM195 10h1v1h-1zM195 11h1v1h-1zM194 11h1v1h-1zM194 12h1v1h-1zM196 12h1v1h-1zM194 13h1v1h-1zM196 13h1v1h-1zM193 14h1v1h-1zM197 14h1v1h-1zM197 5h1v1h-1zM198 5h1v1h-1zM197 6h1v1h-1zM198 6h1v1h-1zM197 15h1v1h-1zM200 0h1v1h-1zM200 1h1v1h-1zM200 2h1v1h-1zM201 2h1v1h-1zM199 3h1v1h-1zM201 3h1v1h-1zM199 4h1v1h-1zM202 4h1v1h-1zM199 7h1v1h-1zM202 7h1v1h-1zM199 8h1v1h-1zM201 8h1v1h-1zM200 9h1v1h-1zM201 9h1v1h-1zM200 10h1v1h-1zM200 11h1v1h-1zM199 12h1v1h-1zM201 12h1v1h-1zM199 13h1v1h-1zM201 13h1v1h-1zM198 14h1v1h-1zM202 14h1v1h-1zM202 5h1v1h-1zM202 6h1v1h-1zM202 15h1v1h-1zM204 0h1v1h-1zM203 0h1v1h-1zM204 1h1v1h-1zM204 2h1v1h-1zM203 3h1v1h-1zM205 3h1v1h-1zM203 4h1v1h-1zM205 4h1v1h-1zM203 7h1v1h-1zM205 7h1v1h-1zM203 8h1v1h-1zM205 8h1v1h-1zM204 9h1v1h-1zM204 10h1v1h-1zM204 11h1v1h-1zM203 11h1v1h-1zM203 12h1v1h-1zM205 12h1v1h-1zM203 13h1v1h-1zM205 13h1v1h-1zM206 14h1v1h-1zM206 5h1v1h-1zM207 5h1v1h-1zM206 6h1v1h-1zM207 6h1v1h-1zM207 15h1v1h-1zM209 0h1v1h-1zM208 0h1v1h-1zM209 1h1v1h-1zM209 2h1v1h-1zM208 3h1v1h-1zM210 3h1v1h-1zM208 4h1v1h-1zM210 4h1v1h-1zM208 7h1v1h-1zM210 7h1v1h-1zM208 8h1v1h-1zM210 8h1v1h-1zM209 9h1v1h-1zM209 10h1v1h-1zM209 11h1v1h-1zM208 11h1v1h-1zM208 12h1v1h-1zM210 12h1v1h-1zM208 13h1v1h-1zM210 13h1v1h-1zM207 14h1v1h-1z"/></svg>
<svg style="left:449px;top:392px" width="211" height="16" viewBox="0 0 211 16" shape-rendering="crispEdges" fill="none" stroke="#000" stroke-width="1"><path d="M-12 16 L4 0M-6 16 L10 0M1 16 L17 0M8 16 L24 0M14 16 L30 0M21 16 L37 0M28 16 L44 0M34 16 L50 0M41 16 L57 0M48 16 L64 0M54 16 L70 0M61 16 L77 0M68 16 L84 0M74 16 L90 0M81 16 L97 0M88 16 L104 0M94 16 L110 0M101 16 L117 0M108 16 L124 0M114 16 L130 0M121 16 L137 0M128 16 L144 0M134 16 L150 0M141 16 L157 0M148 16 L164 0M154 16 L170 0M161 16 L177 0M168 16 L184 0M174 16 L190 0M181 16 L197 0M188 16 L204 0M194 16 L210 0M201 16 L217 0M208 16 L224 0"/><path d="M-28 0 L-18.5 9.5M-13 15 L-12 16M-17 4 L-7.5 13.5M-14 0 L-11.5 2.5M-6 8 L2 16M-8 0 L-1.5 6.5M4 12 L8 16M0 1 L9.5 10.5M11 5 L20.5 14.5M12 0 L15.5 3.5M21 9 L28 16M19 0 L26.5 7.5M32 13 L35 16M27 2 L36.5 11.5M32 0 L32.5 0.5M38 6 L47.5 15.5M38 0 L42.5 4.5M48 10 L54 16M45 0 L53.5 8.5M59 14 L61 16M55 3 L64.5 12.5M58 0 L59.5 1.5M65 7 L74 16M65 0 L70.5 5.5M76 11 L81 16M72 0 L81.5 9.5M87 15 L88 16M82 4 L91.5 13.5M85 0 L87.5 2.5M93 8 L101 16M91 0 L97.5 6.5M103 12 L107 16M99 1 L108.5 10.5M109 5 L118.5 14.5M111 0 L114.5 3.5M120 9 L127 16M118 0 L125.5 7.5M131 13 L134 16M126 2 L135.5 11.5M131 0 L131.5 0.5M137 6 L146.5 15.5M138 0 L142.5 4.5M148 10 L154 16M144 0 L152.5 8.5M158 14 L160 16M154 3 L163.5 12.5M157 0 L158.5 1.5M164 7 L173 16M164 0 L169.5 5.5M175 11 L180 16M170 0 L179.5 9.5M185 15 L186 16M181 4 L190.5 13.5M184 0 L186.5 2.5M192 8 L200 16M190 0 L196.5 6.5M202 12 L206 16M198 1 L207.5 10.5M209 5 L218.5 14.5M210 0 L213.5 3.5M219 9 L226 16M217 0 L224.5 7.5M230 13 L233 16M225 2 L234.5 11.5M230 0 L230.5 0.5M236 6 L245.5 15.5M236 0 L240.5 4.5M246 10 L252 16M243 0 L251.5 8.5M257 14 L259 16M253 3 L262.5 12.5M256 0 L257.5 1.5M263 7 L272 16"/></svg>
<svg style="left:449px;top:410px" width="211" height="16" viewBox="0 0 211 16" shape-rendering="crispEdges" fill="none" stroke="#000" stroke-width="1"><path fill="#000" stroke="none" d="M3 2h1v1h-1zM4 1h1v1h-1zM9 2h1v1h-1zM10 1h1v1h-1zM16 1h1v1h-1zM16 2h1v1h-1zM23 2h1v1h-1zM24 1h1v1h-1zM30 2h1v1h-1zM31 1h1v1h-1zM36 1h1v1h-1zM36 2h1v1h-1zM43 2h1v1h-1zM44 1h1v1h-1zM50 2h1v1h-1zM51 1h1v1h-1zM57 1h1v1h-1zM57 2h1v1h-1zM63 2h1v1h-1zM64 1h1v1h-1zM70 2h1v1h-1zM71 1h1v1h-1zM77 1h1v1h-1zM77 2h1v1h-1zM84 2h1v1h-1zM85 1h1v1h-1zM90 2h1v1h-1zM91 1h1v1h-1zM97 1h1v1h-1zM97 2h1v1h-1zM104 2h1v1h-1zM105 1h1v1h-1zM110 2h1v1h-1zM111 1h1v1h-1zM117 1h1v1h-1zM117 2h1v1h-1zM124 2h1v1h-1zM125 1h1v1h-1zM131 2h1v1h-1zM132 1h1v1h-1zM137 1h1v1h-1zM137 2h1v1h-1zM144 2h1v1h-1zM145 1h1v1h-1zM151 2h1v1h-1zM152 1h1v1h-1zM158 1h1v1h-1zM158 2h1v1h-1zM164 2h1v1h-1zM165 1h1v1h-1zM171 2h1v1h-1zM172 1h1v1h-1zM178 1h1v1h-1zM178 2h1v1h-1zM184 2h1v1h-1zM185 1h1v1h-1zM191 2h1v1h-1zM192 1h1v1h-1zM198 1h1v1h-1zM198 2h1v1h-1zM205 2h1v1h-1zM206 1h1v1h-1zM0 4h1v1h-1zM7 4h1v1h-1zM7 5h1v1h-1zM13 5h1v1h-1zM14 4h1v1h-1zM20 5h1v1h-1zM21 4h1v1h-1zM27 4h1v1h-1zM27 5h1v1h-1zM33 5h1v1h-1zM34 4h1v1h-1zM40 5h1v1h-1zM41 4h1v1h-1zM47 4h1v1h-1zM47 5h1v1h-1zM54 5h1v1h-1zM55 4h1v1h-1zM60 5h1v1h-1zM61 4h1v1h-1zM67 4h1v1h-1zM67 5h1v1h-1zM74 5h1v1h-1zM75 4h1v1h-1zM81 5h1v1h-1zM82 4h1v1h-1zM87 4h1v1h-1zM87 5h1v1h-1zM94 5h1v1h-1zM95 4h1v1h-1zM101 5h1v1h-1zM102 4h1v1h-1zM108 4h1v1h-1zM108 5h1v1h-1zM114 5h1v1h-1zM115 4h1v1h-1zM121 5h1v1h-1zM122 4h1v1h-1zM128 4h1v1h-1zM128 5h1v1h-1zM134 5h1v1h-1zM135 4h1v1h-1zM141 5h1v1h-1zM142 4h1v1h-1zM148 4h1v1h-1zM148 5h1v1h-1zM155 5h1v1h-1zM156 4h1v1h-1zM161 5h1v1h-1zM162 4h1v1h-1zM168 4h1v1h-1zM168 5h1v1h-1zM175 5h1v1h-1zM176 4h1v1h-1zM182 5h1v1h-1zM183 4h1v1h-1zM188 4h1v1h-1zM188 5h1v1h-1zM195 5h1v1h-1zM196 4h1v1h-1zM202 5h1v1h-1zM203 4h1v1h-1zM209 4h1v1h-1zM209 5h1v1h-1zM3 8h1v1h-1zM4 7h1v1h-1zM9 8h1v1h-1zM10 7h1v1h-1zM16 8h1v1h-1zM23 8h1v1h-1zM24 7h1v1h-1zM30 8h1v1h-1zM31 7h1v1h-1zM36 8h1v1h-1zM43 8h1v1h-1zM44 7h1v1h-1zM50 8h1v1h-1zM51 7h1v1h-1zM57 8h1v1h-1zM63 8h1v1h-1zM64 7h1v1h-1zM70 8h1v1h-1zM71 7h1v1h-1zM77 8h1v1h-1zM84 8h1v1h-1zM85 7h1v1h-1zM90 8h1v1h-1zM91 7h1v1h-1zM97 8h1v1h-1zM104 8h1v1h-1zM105 7h1v1h-1zM110 8h1v1h-1zM111 7h1v1h-1zM117 8h1v1h-1zM124 8h1v1h-1zM125 7h1v1h-1zM131 8h1v1h-1zM132 7h1v1h-1zM137 8h1v1h-1zM144 8h1v1h-1zM145 7h1v1h-1zM151 8h1v1h-1zM152 7h1v1h-1zM158 8h1v1h-1zM164 8h1v1h-1zM165 7h1v1h-1zM171 8h1v1h-1zM172 7h1v1h-1zM178 8h1v1h-1zM184 8h1v1h-1zM185 7h1v1h-1zM191 8h1v1h-1zM192 7h1v1h-1zM198 8h1v1h-1zM205 8h1v1h-1zM206 7h1v1h-1zM0 11h1v1h-1zM7 11h1v1h-1zM7 12h1v1h-1zM13 12h1v1h-1zM14 11h1v1h-1zM20 12h1v1h-1zM21 11h1v1h-1zM27 11h1v1h-1zM27 12h1v1h-1zM33 12h1v1h-1zM34 11h1v1h-1zM40 12h1v1h-1zM41 11h1v1h-1zM47 11h1v1h-1zM47 12h1v1h-1zM54 12h1v1h-1zM55 11h1v1h-1zM60 12h1v1h-1zM61 11h1v1h-1zM67 11h1v1h-1zM67 12h1v1h-1zM74 12h1v1h-1zM75 11h1v1h-1zM81 12h1v1h-1zM82 11h1v1h-1zM87 11h1v1h-1zM87 12h1v1h-1zM94 12h1v1h-1zM95 11h1v1h-1zM101 12h1v1h-1zM102 11h1v1h-1zM108 11h1v1h-1zM108 12h1v1h-1zM114 12h1v1h-1zM115 11h1v1h-1zM121 12h1v1h-1zM122 11h1v1h-1zM128 11h1v1h-1zM128 12h1v1h-1zM134 12h1v1h-1zM135 11h1v1h-1zM141 12h1v1h-1zM142 11h1v1h-1zM148 11h1v1h-1zM148 12h1v1h-1zM155 12h1v1h-1zM156 11h1v1h-1zM161 12h1v1h-1zM162 11h1v1h-1zM168 11h1v1h-1zM168 12h1v1h-1zM175 12h1v1h-1zM176 11h1v1h-1zM182 12h1v1h-1zM183 11h1v1h-1zM188 11h1v1h-1zM188 12h1v1h-1zM195 12h1v1h-1zM196 11h1v1h-1zM202 12h1v1h-1zM203 11h1v1h-1zM209 11h1v1h-1zM209 12h1v1h-1zM3 15h1v1h-1zM4 14h1v1h-1zM9 15h1v1h-1zM10 14h1v1h-1zM16 14h1v1h-1zM16 15h1v1h-1zM23 15h1v1h-1zM24 14h1v1h-1zM30 15h1v1h-1zM31 14h1v1h-1zM36 14h1v1h-1zM36 15h1v1h-1zM43 15h1v1h-1zM44 14h1v1h-1zM50 15h1v1h-1zM51 14h1v1h-1zM57 14h1v1h-1zM57 15h1v1h-1zM63 15h1v1h-1zM64 14h1v1h-1zM70 15h1v1h-1zM71 14h1v1h-1zM77 14h1v1h-1zM77 15h1v1h-1zM84 15h1v1h-1zM85 14h1v1h-1zM90 15h1v1h-1zM91 14h1v1h-1zM97 14h1v1h-1zM97 15h1v1h-1zM104 15h1v1h-1zM105 14h1v1h-1zM110 15h1v1h-1zM111 14h1v1h-1zM117 14h1v1h-1zM117 15h1v1h-1zM124 15h1v1h-1zM125 14h1v1h-1zM131 15h1v1h-1zM132 14h1v1h-1zM137 14h1v1h-1zM137 15h1v1h-1zM144 15h1v1h-1zM145 14h1v1h-1zM151 15h1v1h-1zM152 14h1v1h-1zM158 14h1v1h-1zM158 15h1v1h-1zM164 15h1v1h-1zM165 14h1v1h-1zM171 15h1v1h-1zM172 14h1v1h-1zM178 14h1v1h-1zM178 15h1v1h-1zM184 15h1v1h-1zM185 14h1v1h-1zM191 15h1v1h-1zM192 14h1v1h-1zM198 14h1v1h-1zM198 15h1v1h-1zM205 15h1v1h-1zM206 14h1v1h-1z"/></svg>
<svg style="left:449px;top:428px" width="211" height="16" viewBox="0 0 211 16" shape-rendering="crispEdges" fill="none" stroke="#000" stroke-width="1"><path fill="#000" stroke="none" d="M12 0h2v1h-2zM15 0h1v1h-1zM13 1h2v1h-2zM12 1h1v1h-1zM13 2h1v1h-1zM39 0h2v1h-2zM42 0h1v1h-1zM40 1h2v1h-2zM40 2h1v1h-1zM65 0h2v1h-2zM68 0h1v1h-1zM66 1h2v1h-2zM65 1h1v1h-1zM66 2h1v1h-1zM92 0h2v1h-2zM95 0h1v1h-1zM93 1h2v1h-2zM93 2h1v1h-1zM119 0h2v1h-2zM122 0h1v1h-1zM120 1h2v1h-2zM119 1h1v1h-1zM120 2h1v1h-1zM145 0h2v1h-2zM148 0h1v1h-1zM146 1h2v1h-2zM146 2h1v1h-1zM172 0h2v1h-2zM175 0h1v1h-1zM173 1h2v1h-2zM172 1h1v1h-1zM173 2h1v1h-1zM199 0h2v1h-2zM202 0h1v1h-1zM200 1h2v1h-2zM200 2h1v1h-1zM27 12h1v4h-1zM25 14h4v1h-4zM54 12h1v4h-1zM52 14h4v1h-4zM80 12h1v4h-1zM78 14h4v1h-4zM106 12h1v4h-1zM104 14h4v1h-4zM133 12h1v4h-1zM131 14h4v1h-4zM160 12h1v4h-1zM158 14h4v1h-4zM186 12h1v4h-1zM184 14h4v1h-4zM1 14h1v1h-1zM0 15h1v1h-1z"/></svg>
<svg style="left:449px;top:446px" width="211" height="16" viewBox="0 0 211 16" shape-rendering="crispEdges" fill="none" stroke="#000" stroke-width="1"><path fill="#000" stroke="none" d="M0 2h6v1h-6zM6 3h23v1h-23zM0 4h6v1h-6zM0 5h6v1h-6zM0 6h2v1h-2zM3 6h3v1h-3zM1 7h8v1h-8zM0 8h9v1h-9zM0 9h2v1h-2zM6 5h19v1h-19zM9 7h16v1h-16zM25 6h10v2h-10zM0 12h3v1h-3zM3 11h6v1h-6zM9 10h7v1h-7zM16 9h10v1h-10zM26 10h10v1h-10zM36 11h8v1h-8zM0 15h6v1h-6zM6 14h31v1h-31zM29 2h24v1h-24zM53 3h23v1h-23zM43 4h3v1h-3zM47 4h6v1h-6zM35 5h8v1h-8zM44 5h9v1h-9zM40 6h4v1h-4zM45 6h4v1h-4zM50 6h3v1h-3zM38 7h4v1h-4zM45 7h2v1h-2zM48 7h8v1h-8zM36 8h20v1h-20zM42 9h7v1h-7zM53 5h19v1h-19zM56 7h16v1h-16zM72 6h10v2h-10zM44 12h6v1h-6zM50 11h6v1h-6zM56 10h7v1h-7zM63 9h10v1h-10zM73 10h10v1h-10zM83 11h8v1h-8zM37 15h16v1h-16zM53 14h31v1h-31zM76 2h24v1h-24zM100 3h23v1h-23zM90 4h3v1h-3zM94 4h6v1h-6zM82 5h8v1h-8zM91 5h9v1h-9zM87 6h4v1h-4zM92 6h4v1h-4zM97 6h3v1h-3zM85 7h4v1h-4zM92 7h2v1h-2zM95 7h8v1h-8zM83 8h20v1h-20zM89 9h7v1h-7zM100 5h19v1h-19zM103 7h16v1h-16zM119 6h10v2h-10zM91 12h6v1h-6zM97 11h6v1h-6zM103 10h7v1h-7zM110 9h10v1h-10zM120 10h10v1h-10zM130 11h8v1h-8zM84 15h16v1h-16zM100 14h31v1h-31zM123 2h24v1h-24zM147 3h23v1h-23zM137 4h3v1h-3zM141 4h6v1h-6zM129 5h8v1h-8zM138 5h9v1h-9zM134 6h4v1h-4zM139 6h4v1h-4zM144 6h3v1h-3zM132 7h4v1h-4zM139 7h2v1h-2zM142 7h8v1h-8zM130 8h20v1h-20zM136 9h7v1h-7zM147 5h19v1h-19zM150 7h16v1h-16zM166 6h10v2h-10zM138 12h6v1h-6zM144 11h6v1h-6zM150 10h7v1h-7zM157 9h10v1h-10zM167 10h10v1h-10zM177 11h8v1h-8zM131 15h16v1h-16zM147 14h31v1h-31zM170 2h24v1h-24zM194 3h17v1h-17zM184 4h3v1h-3zM188 4h6v1h-6zM176 5h8v1h-8zM185 5h9v1h-9zM181 6h4v1h-4zM186 6h4v1h-4zM191 6h3v1h-3zM179 7h4v1h-4zM186 7h2v1h-2zM189 7h8v1h-8zM177 8h20v1h-20zM183 9h7v1h-7zM194 5h17v1h-17zM197 7h14v1h-14zM185 12h6v1h-6zM191 11h6v1h-6zM197 10h7v1h-7zM204 9h7v1h-7zM178 15h16v1h-16zM194 14h17v1h-17z"/></svg>
<svg style="left:449px;top:464px" width="211" height="16" viewBox="0 0 211 16" shape-rendering="crispEdges" fill="none" stroke="#000" stroke-width="1"><path d="M7.5 0 V16M37.5 0 V16M44.5 0 V16M74.5 0 V16M82.5 0 V16M111.5 0 V16M119.5 0 V16M148.5 0 V16M156.5 0 V16M185.5 0 V16M193.5 0 V16"/></svg>
<svg style="left:449px;top:482px" width="211" height="16" viewBox="0 0 211 16" shape-rendering="crispEdges" fill="none" stroke="#000" stroke-width="1"><path d="M0 4.5 H211"/></svg>
<svg style="left:449px;top:500px" width="211" height="3" viewBox="0 0 211 3" shape-rendering="crispEdges" fill="none" stroke="#000" stroke-width="1"><path d="M2 3 L5 0M7 3 L10 0M12 3 L15 0M17 3 L20 0M22 3 L25 0M28 3 L31 0M33 3 L36 0M38 3 L41 0M43 3 L46 0M49 3 L52 0M54 3 L57 0M59 3 L62 0M64 3 L67 0M69 3 L72 0M74 3 L77 0M80 3 L83 0M85 3 L88 0M90 3 L93 0M95 3 L98 0M100 3 L103 0M106 3 L109 0M111 3 L114 0M116 3 L119 0M121 3 L124 0M127 3 L130 0M132 3 L135 0M137 3 L140 0M142 3 L145 0M147 3 L150 0M152 3 L155 0M158 3 L161 0M163 3 L166 0M168 3 L171 0M173 3 L176 0M178 3 L181 0M184 3 L187 0M189 3 L192 0M194 3 L197 0M199 3 L202 0M204 3 L207 0M210 3 L213 0"/></svg>

<span class="t" style="left:9.00px;top:7.84px;font-size:12px;letter-spacing:0.009px;color:#000;">DGN-Exporteinrichtung ändern</span>
<span class="t" style="left:1101.30px;top:7.50px;font-size:13px;color:#000;">?</span>
<span class="t" style="left:24.00px;top:41.19px;font-size:11px;letter-spacing:-0.105px;color:#000;">Exporteinrichtung wählen</span>
<span class="t" style="left:28.00px;top:61.19px;font-size:11px;letter-spacing:0.039px;color:#fff;">&lt;Exporteinrichtung in Sitzung&gt;</span>
<span class="t" style="left:215.50px;top:53.19px;font-size:11px;letter-spacing:-0.365px;color:#000;">Ebenen</span>
<span class="t" style="left:263.50px;top:53.19px;font-size:11px;letter-spacing:-0.477px;color:#000;">Linien</span>
<span class="t" style="left:305.50px;top:53.19px;font-size:11px;letter-spacing:-0.226px;color:#000;">Linienstärken</span>
<span class="t" style="left:380.50px;top:51.19px;font-size:11px;letter-spacing:-0.271px;color:#000;">Muster</span>
<span class="t" style="left:427.50px;top:53.19px;font-size:11px;letter-spacing:0.077px;color:#000;">Text und Schriftarten</span>
<span class="t" style="left:540.50px;top:53.19px;font-size:11px;letter-spacing:-0.227px;color:#000;">Farben</span>
<span class="t" style="left:587.00px;top:53.19px;font-size:11px;letter-spacing:-0.280px;color:#000;">Seed-Datei</span>
<span class="t" style="left:652.00px;top:53.19px;font-size:11px;letter-spacing:-0.451px;color:#000;">Allgemein</span>
<span class="t" style="left:235.00px;top:86.19px;font-size:11px;letter-spacing:-0.143px;color:#000;">Muster laden aus:</span>
<span class="t" style="left:410.00px;top:88.19px;font-size:11px;letter-spacing:-0.038px;color:#fff;">C:\Program Files\Autodesk\Revit 2019\ACADInterop\acdbiso.pat</span>
<span class="t" style="left:1005.50px;top:88.19px;font-size:11px;letter-spacing:0.443px;color:#000;font-weight:bold;">...</span>
<span class="t" style="left:1032.00px;top:88.19px;font-size:11px;letter-spacing:-0.262px;color:#000;">Alles zurücksetzen</span>
<span class="t" style="left:234.00px;top:116.19px;font-size:11px;letter-spacing:-0.170px;color:#000;">Revit-Füllmuster Mustern in DGN zuordnen:</span>
<span class="t" style="left:400.50px;top:136.84px;font-size:12px;letter-spacing:-0.124px;color:#000;">Füllmuster in Revit</span>
<span class="t" style="left:842.50px;top:136.84px;font-size:12px;letter-spacing:-0.181px;color:#000;">Muster in DGN</span>
<span class="t" style="left:238.00px;top:156.84px;font-size:12px;letter-spacing:0.073px;color:#000;">&lt;Flächenfüllung&gt;</span>
<span class="t" style="left:662.00px;top:155.84px;font-size:12px;letter-spacing:-0.014px;color:#fff;">{Muster automatisch generieren}</span>
<span class="t" style="left:238.00px;top:174.84px;font-size:12px;letter-spacing:-0.378px;color:#000;">CH_Backstein</span>
<span class="t" style="left:662.00px;top:173.84px;font-size:12px;letter-spacing:-0.014px;color:#000;">{Muster automatisch generieren}</span>
<span class="t" style="left:238.00px;top:192.84px;font-size:12px;letter-spacing:-0.359px;color:#000;">CH_Beton</span>
<span class="t" style="left:662.00px;top:191.84px;font-size:12px;letter-spacing:-0.014px;color:#000;">{Muster automatisch generieren}</span>
<span class="t" style="left:238.00px;top:210.84px;font-size:12px;letter-spacing:-0.387px;color:#000;">CH_Feuerfeste Steine</span>
<span class="t" style="left:662.00px;top:209.84px;font-size:12px;letter-spacing:-0.014px;color:#000;">{Muster automatisch generieren}</span>
<span class="t" style="left:238.00px;top:228.84px;font-size:12px;letter-spacing:-0.705px;color:#000;">CH_Glas</span>
<span class="t" style="left:662.00px;top:227.84px;font-size:12px;letter-spacing:-0.014px;color:#000;">{Muster automatisch generieren}</span>
<span class="t" style="left:238.00px;top:246.84px;font-size:12px;letter-spacing:-0.082px;color:#000;">CH_Holzwerkstoff</span>
<span class="t" style="left:662.00px;top:245.84px;font-size:12px;letter-spacing:-0.014px;color:#000;">{Muster automatisch generieren}</span>
<span class="t" style="left:238.00px;top:264.84px;font-size:12px;letter-spacing:-0.326px;color:#000;">CH_Kalksandstein</span>
<span class="t" style="left:662.00px;top:263.84px;font-size:12px;letter-spacing:-0.014px;color:#000;">{Muster automatisch generieren}</span>
<span class="t" style="left:238.00px;top:282.84px;font-size:12px;letter-spacing:-0.085px;color:#000;">CH_Waermedaemmung</span>
<span class="t" style="left:662.00px;top:281.84px;font-size:12px;letter-spacing:-0.014px;color:#000;">{Muster automatisch generieren}</span>
<span class="t" style="left:238.00px;top:300.84px;font-size:12px;letter-spacing:-0.142px;color:#000;">Diagonal ab</span>
<span class="t" style="left:662.00px;top:299.84px;font-size:12px;letter-spacing:-0.014px;color:#000;">{Muster automatisch generieren}</span>
<span class="t" style="left:238.00px;top:318.84px;font-size:12px;letter-spacing:-0.074px;color:#000;">Diagonal auf</span>
<span class="t" style="left:662.00px;top:317.84px;font-size:12px;letter-spacing:-0.014px;color:#000;">{Muster automatisch generieren}</span>
<span class="t" style="left:238.00px;top:336.84px;font-size:12px;letter-spacing:-0.154px;color:#000;">Diagonale Kreuzschraffur</span>
<span class="t" style="left:662.00px;top:335.84px;font-size:12px;letter-spacing:-0.014px;color:#000;">{Muster automatisch generieren}</span>
<span class="t" style="left:238.00px;top:354.84px;font-size:12px;letter-spacing:-0.109px;color:#000;">Dreieck_mittel</span>
<span class="t" style="left:662.00px;top:353.84px;font-size:12px;letter-spacing:-0.014px;color:#000;">{Muster automatisch generieren}</span>
<span class="t" style="left:238.00px;top:372.84px;font-size:12px;letter-spacing:-0.017px;color:#000;">Dämmung_weich</span>
<span class="t" style="left:662.00px;top:371.84px;font-size:12px;letter-spacing:-0.014px;color:#000;">{Muster automatisch generieren}</span>
<span class="t" style="left:238.00px;top:390.84px;font-size:12px;letter-spacing:-0.273px;color:#000;">Erdreich</span>
<span class="t" style="left:662.00px;top:389.84px;font-size:12px;letter-spacing:-0.014px;color:#000;">{Muster automatisch generieren}</span>
<span class="t" style="left:238.00px;top:408.84px;font-size:12px;letter-spacing:-0.312px;color:#000;">Estrich</span>
<span class="t" style="left:662.00px;top:407.84px;font-size:12px;letter-spacing:-0.014px;color:#000;">{Muster automatisch generieren}</span>
<span class="t" style="left:238.00px;top:426.84px;font-size:12px;letter-spacing:-0.816px;color:#000;">Gras</span>
<span class="t" style="left:662.00px;top:425.84px;font-size:12px;letter-spacing:-0.014px;color:#000;">{Muster automatisch generieren}</span>
<span class="t" style="left:238.00px;top:444.84px;font-size:12px;letter-spacing:-0.004px;color:#000;">Holz</span>
<span class="t" style="left:662.00px;top:443.84px;font-size:12px;letter-spacing:-0.014px;color:#000;">{Muster automatisch generieren}</span>
<span class="t" style="left:238.00px;top:462.84px;font-size:12px;letter-spacing:0.053px;color:#000;">Holzwerkstoff</span>
<span class="t" style="left:662.00px;top:461.84px;font-size:12px;letter-spacing:-0.014px;color:#000;">{Muster automatisch generieren}</span>
<span class="t" style="left:238.00px;top:480.84px;font-size:12px;letter-spacing:0.047px;color:#000;">Horizontal</span>
<span class="t" style="left:662.00px;top:479.84px;font-size:12px;letter-spacing:-0.014px;color:#000;">{Muster automatisch generieren}</span>
<span class="t" style="left:243.75px;top:511.69px;font-size:11px;letter-spacing:-0.005px;color:#000;">Mustertyp</span>
<span class="t" style="left:265.75px;top:531.19px;font-size:11px;letter-spacing:-0.377px;color:#000;">Zeichnen</span>
<span class="t" style="left:374.50px;top:531.19px;font-size:11px;letter-spacing:-0.443px;color:#000;">Modell</span>
<span class="t" style="left:999.60px;top:587.19px;font-size:11px;letter-spacing:-0.803px;color:#000;">OK</span>
<span class="t" style="left:1077.70px;top:587.19px;font-size:11px;letter-spacing:-0.202px;color:#000;">Abbrechen</span><div class="a" style="left:237px;top:498px;width:864px;height:5px;overflow:hidden;"><span class="t" style="left:425.00px;top:-0.16px;font-size:12px;letter-spacing:-0.014px;">{Muster automatisch generieren}</span></div>
<div class="a" style="left:239px;top:502px;width:1px;height:1px;background:#333;"></div><div class="a" style="left:245px;top:502px;width:1px;height:1px;background:#333;"></div><div class="a" style="left:248px;top:502px;width:5px;height:1px;background:#333;"></div><div class="a" style="left:260px;top:502px;width:5px;height:1px;background:#333;"></div><div class="a" style="left:311px;top:502px;width:1px;height:1px;background:#333;"></div><div class="a" style="left:339px;top:502px;width:1px;height:1px;background:#333;"></div>

</body>
</html>
